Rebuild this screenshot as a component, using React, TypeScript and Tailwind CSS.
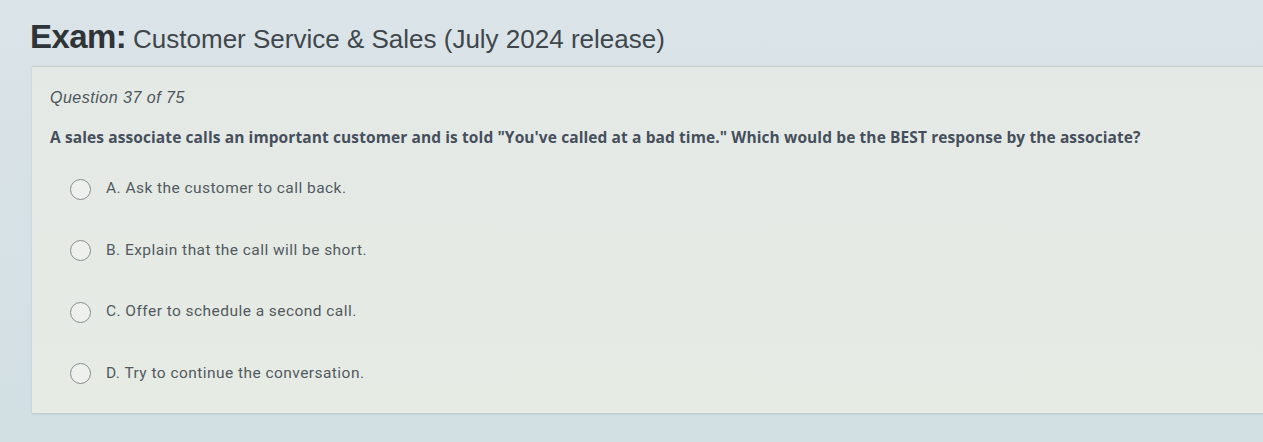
import React from "react";

const options = [
  "A. Ask the customer to call back.",
  "B. Explain that the call will be short.",
  "C. Offer to schedule a second call.",
  "D. Try to continue the conversation.",
];

export default function App() {
  return (
    <div className="w-[1263px] h-[442px] overflow-hidden bg-gradient-to-b from-[#dbe4e8] to-[#d2dfe3] flex flex-col" style={{ fontFamily: "Roboto, 'Liberation Sans', sans-serif" }}>
      <div className="pl-[30px] pt-[18px] h-[66px] flex items-baseline gap-[7px] leading-[38px]" style={{ fontFamily: "'Liberation Sans', Arial, sans-serif" }}>
        <span className="text-[33px] font-bold tracking-[-0.6px] text-[#2f3438]">Exam:</span>
        <span className="text-[26px] text-[#40474c]">Customer Service &amp; Sales (July 2024 release)</span>
      </div>
      <div className="ml-[32px] w-[1240px] h-[347px] bg-gradient-to-b from-[#e4e9e6] to-[#e6ebe4] border-t border-[#c6cfd2] shadow-[0_1px_2px_rgba(150,170,180,0.5)] pl-[18px] pt-[21px]">
        <div className="text-[16px] leading-[20px] italic tracking-[0.5px] text-[#4d555a]" style={{ fontFamily: "'Liberation Sans', Arial, sans-serif" }}>Question 37 of 75</div>
        <div className="mt-[19px] text-[15.5px] leading-[20px] font-bold tracking-[0.1px] text-[#464f5c]" style={{ fontFamily: "'Open Sans', 'Liberation Sans', sans-serif" }}>
          A sales associate calls an important customer and is told "You've called at a bad time." Which would be the BEST response by the associate?
        </div>
        <div className="mt-[31px] flex flex-col gap-[39.5px]">
          {options.map((o) => (
            <label key={o} className="flex items-center gap-[15px] pl-[20px] h-[22px]">
              <span className="w-[21px] h-[21px] shrink-0 rounded-full border-[1.5px] border-[#858c90] bg-[#edf0ec]" />
              <span className="text-[15.5px] tracking-[0.45px] text-[#525a5f]">{o}</span>
            </label>
          ))}
        </div>
      </div>
    </div>
  );
}
